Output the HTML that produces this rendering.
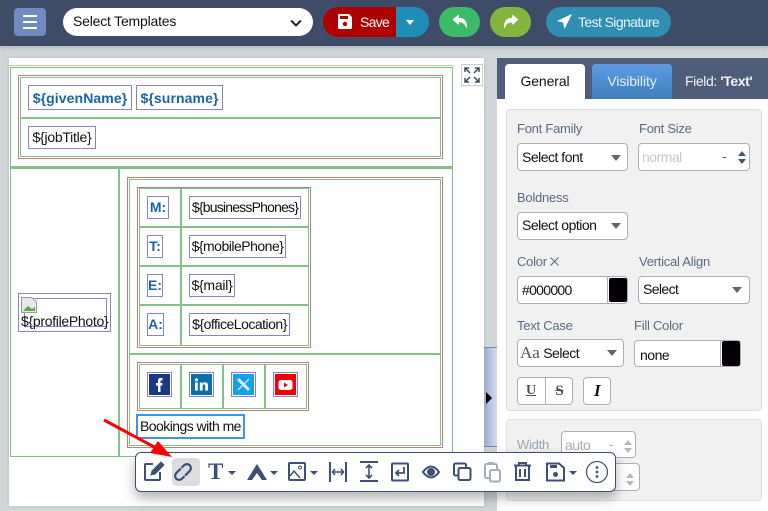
<!DOCTYPE html>
<html><head><meta charset="utf-8"><title>Signature Editor</title>
<style>
*{box-sizing:border-box}
html,body{margin:0;padding:0}
body{width:768px;height:511px;overflow:hidden;position:relative;background:#d0d6d8;font-family:"Liberation Sans",sans-serif;font-size:14px;color:#111}
.a{position:absolute;white-space:nowrap}
.g{position:absolute;border:1px solid #85c187}
.p{position:absolute;border:1px solid #c08080}
.gh{position:absolute;background:#85c187}
.b{position:absolute;border:1px solid #8b82c6;white-space:nowrap;line-height:20px;text-align:center;letter-spacing:-.25px}
.bold{font-weight:700;color:#1565a8;font-size:14px;letter-spacing:.1px}
.lab{position:absolute;color:#5a6b80;font-size:13px;white-space:nowrap;letter-spacing:-.25px}
.in{position:absolute;background:#fff;border:1px solid #adb0b3;border-radius:4px;white-space:nowrap;line-height:26px;padding-left:4px;letter-spacing:-.5px}
.car{position:absolute;width:0;height:0;border-left:5px solid transparent;border-right:5px solid transparent;border-top:6px solid #5d6a68}
.tc{position:absolute;width:0;height:0;border-left:4px solid transparent;border-right:4px solid transparent;border-top:4px solid #3d4f70}
.btn{position:absolute;top:7px;height:30px;border-radius:15px}
svg{position:absolute;overflow:visible}
</style></head><body>

<!-- top bar -->
<div class="a" style="left:0;top:0;width:768px;height:46px;background:#3e4c68;box-shadow:0 2px 4px rgba(0,0,0,.15)"></div>
<div class="a" style="left:14px;top:8px;width:32px;height:28px;background:#6f8bbf;border-radius:4px"></div>
<div class="a" style="left:23px;top:15px;width:14px;height:2px;background:#fff"></div>
<div class="a" style="left:23px;top:21px;width:14px;height:2px;background:#fff"></div>
<div class="a" style="left:23px;top:27px;width:14px;height:2px;background:#fff"></div>
<div class="a" style="left:63px;top:8px;width:250px;height:28px;background:#fff;border-radius:14px;line-height:26px;padding-left:10px;letter-spacing:-.2px">Select Templates</div>
<svg style="left:290px;top:19px" width="12" height="8"><path d="M1 1.500 6 6.500 11 1.500" fill="none" stroke="#222" stroke-width="2"/></svg>

<div class="btn" style="left:323px;width:75px;background:#ae0000;border-radius:15px 0 0 15px"></div>
<svg style="left:338px;top:14px" width="14" height="15" viewBox="0 0 14 15"><path d="M0 1.500Q0 0 1.500 0H11L14 3V13.500Q14 15 12.500 15H1.500Q0 15 0 13.500Z" fill="#fff"/><rect x="2" y="2" width="8" height="3" fill="#ae0000"/><circle cx="7" cy="10" r="2.200" fill="#ae0000"/></svg>
<div class="a" style="left:360px;top:14px;color:#fff;line-height:16px;letter-spacing:-.7px">Save</div>
<div class="btn" style="left:396px;width:33px;background:#1f8db6;border-radius:0 15px 15px 0"></div>
<div class="a" style="left:406px;top:20px;width:0;height:0;border-left:4.500px solid transparent;border-right:4.500px solid transparent;border-top:5px solid #fff"></div>
<div class="btn" style="left:439px;width:41px;background:#3bbb67"></div>
<svg style="left:452px;top:14px" width="16" height="15" viewBox="0 0 16 15"><path d="M1 5.500 6.500 1V4C12 4 15 7 14.500 14 13.500 10 11 8 6.500 8V10.500Z" fill="#fff" stroke="#fff" stroke-width=".6" stroke-linejoin="round"/></svg>
<div class="btn" style="left:490px;width:41px;background:#84b33e"></div>
<svg style="left:503px;top:14px" width="16" height="15" viewBox="0 0 16 15"><path d="M15 5.500 9.500 1V4C4 4 1 7 1.500 14 2.500 10 5 8 9.500 8V10.500Z" fill="#fff" stroke="#fff" stroke-width=".6" stroke-linejoin="round"/></svg>
<div class="btn" style="left:546px;width:125px;background:#2f8eb2"></div>
<svg style="left:557px;top:14px" width="15" height="15" viewBox="0 0 15 15"><path d="M15 0 0 7 6 8.500 7.500 15Z" fill="#fff"/></svg>
<div class="a" style="left:578px;top:14px;color:#e8f2f6;line-height:16px;letter-spacing:-.6px">Test Signature</div>

<!-- canvas -->
<div class="a" style="left:9px;top:58px;width:475px;height:448px;background:#fff;box-shadow:0 0 3px rgba(0,0,0,.12)"></div>
<div class="a" style="left:461px;top:64px;width:22px;height:22px;border:1px solid #ccc;background:#fff"></div>
<svg style="left:464px;top:67px" width="16" height="16" viewBox="0 0 16 16"><g fill="none" stroke="#3e4c60" stroke-width="1.500"><path d="M1 5V1H5M1 1 6 6M15 5V1H11M15 1 10 6M1 11V15H5M1 15 6 10M15 11V15H11M15 15 10 10"/></g></svg>

<div class="a" style="left:9px;top:65px;width:445px;height:1px;background:#cdc9a0"></div>
<div class="g" style="left:10px;top:67px;width:443px;height:390px"></div>
<div class="p" style="left:18px;top:75px;width:425px;height:84px"></div>
<div class="g" style="left:20px;top:77px;width:421px;height:80px"></div>
<div class="gh" style="left:20px;top:117px;width:421px;height:2px"></div>
<div class="gh" style="left:10px;top:166px;width:443px;height:3px"></div>
<div class="gh" style="left:118px;top:168px;width:2px;height:288px"></div>
<div class="p" style="left:127px;top:177px;width:316px;height:271px"></div>
<div class="g" style="left:129px;top:179px;width:312px;height:267px"></div>
<div class="gh" style="left:129px;top:353px;width:312px;height:2px"></div>
<div class="p" style="left:137px;top:187px;width:174px;height:161px"></div>
<div class="g" style="left:139px;top:188px;width:170px;height:158px"></div>
<div class="gh" style="left:180px;top:188px;width:2px;height:158px"></div>
<div class="gh" style="left:139px;top:226px;width:170px;height:2px"></div>
<div class="gh" style="left:139px;top:265px;width:170px;height:2px"></div>
<div class="gh" style="left:139px;top:304px;width:170px;height:2px"></div>

<div class="b bold" style="left:28px;top:85px;width:104px;height:25px;line-height:24px">${givenName}</div>
<div class="b bold" style="left:136px;top:85px;width:87px;height:25px;line-height:24px">${surname}</div>
<div class="b" style="left:28px;top:126px;width:68px;height:23px;line-height:21px">${jobTitle}</div>

<div class="b bold" style="left:147px;top:196px;width:22px;height:23px;line-height:21px;letter-spacing:0">M:</div>
<div class="b" style="left:189px;top:196px;width:112px;height:23px;line-height:21px;letter-spacing:-.8px">${businessPhones}</div>
<div class="b bold" style="left:147px;top:235px;width:16px;height:23px;line-height:21px;letter-spacing:0">T:</div>
<div class="b" style="left:189px;top:235px;width:97px;height:23px;line-height:21px;letter-spacing:-.5px">${mobilePhone}</div>
<div class="b bold" style="left:147px;top:274px;width:16px;height:23px;line-height:21px;letter-spacing:0">E:</div>
<div class="b" style="left:189px;top:274px;width:46px;height:23px;line-height:21px">${mail}</div>
<div class="b bold" style="left:147px;top:313px;width:17px;height:23px;line-height:21px;letter-spacing:0">A:</div>
<div class="b" style="left:189px;top:313px;width:101px;height:23px;line-height:21px;letter-spacing:-.5px">${officeLocation}</div>

<!-- profile -->
<div class="b" style="left:18px;top:293px;width:93px;height:39px"></div>
<div class="b" style="left:24px;top:298px;width:83px;height:29px"></div>
<svg style="left:21px;top:297px" width="16" height="16" viewBox="0 0 16 16"><path d="M.5.5H11L15.500 5V15.500H.5Z" fill="#e4e8ee" stroke="#9a9a9a"/><path d="M2 14 7 9 11 12 14 10V14Z" fill="#5fa83e"/></svg>
<div class="a" style="left:21px;top:313px;line-height:16px;letter-spacing:-.3px;font-size:14px">${profilePhoto}</div>

<!-- social -->
<div class="p" style="left:137px;top:362px;width:172px;height:49px"></div>
<div class="g" style="left:139px;top:364px;width:168px;height:45px"></div>
<div class="gh" style="left:180px;top:364px;width:2px;height:45px"></div>
<div class="gh" style="left:222px;top:364px;width:2px;height:45px"></div>
<div class="gh" style="left:264px;top:364px;width:2px;height:45px"></div>
<div class="b" style="left:147px;top:372px;width:25px;height:25px"></div>
<div class="b" style="left:189px;top:372px;width:25px;height:25px"></div>
<div class="b" style="left:231px;top:372px;width:25px;height:25px"></div>
<div class="b" style="left:273px;top:372px;width:25px;height:25px"></div>
<svg style="left:149px;top:374px" width="21" height="21" viewBox="0 0 21 21"><rect width="21" height="21" fill="#183a86"/><path d="M9 18V11.500H7V9H9V6.500Q9 4 11.500 4H13.500V6.500H12Q11.500 6.500 11.500 7.200V9H13.500L13.200 11.500H11.500V18Z" fill="#fff"/></svg>
<svg style="left:191px;top:374px" width="21" height="21" viewBox="0 0 21 21"><rect width="21" height="21" fill="#0a70ad"/><rect x="4" y="8.500" width="2.800" height="8" fill="#fff"/><circle cx="5.400" cy="5.800" r="1.600" fill="#fff"/><path d="M8.800 8.500H11.300V9.600Q12 8.300 14 8.300 17 8.300 17 11.500V16.500H14.200V12Q14.200 10.400 13 10.400 11.600 10.400 11.600 12V16.500H8.800Z" fill="#fff"/></svg>
<svg style="left:233px;top:374px" width="21" height="21" viewBox="0 0 21 21"><rect width="21" height="21" fill="#13a0ec"/><path d="M5 5 16 16" stroke="#d8f0fc" stroke-width="3"/><path d="M16 5 5 16" stroke="#d8f0fc" stroke-width="1.300"/></svg>
<svg style="left:275px;top:374px" width="21" height="21" viewBox="0 0 21 21"><rect width="21" height="21" fill="#f00006"/><rect x="3.500" y="6" width="14" height="10" rx="2.500" fill="#fff"/><path d="M9 8.500 13 11 9 13.500Z" fill="#f00006"/></svg>

<div class="a" style="left:136px;top:414px;width:109px;height:25px;border:2px solid #3b97e1;background:#fff;line-height:21px;padding-left:2px;letter-spacing:-.55px">Bookings with me</div>

<!-- side strip -->
<div class="a" style="left:484px;top:347px;width:13px;height:100px;background:linear-gradient(90deg,#9aa9c8,#d5deee);border-top:1px solid #6f88c0;border-bottom:1px solid #6f88c0"></div>
<div class="a" style="left:486px;top:392px;width:0;height:0;border-top:6px solid transparent;border-bottom:6px solid transparent;border-left:6px solid #000"></div>

<!-- right panel -->
<div class="a" style="left:497px;top:58px;width:271px;height:453px;background:#fff"></div>
<div class="a" style="left:497px;top:58px;width:271px;height:41px;background:#4e5d79"></div>
<div class="a" style="left:505px;top:64px;width:80px;height:35px;background:#fff;border-radius:4px 4px 0 0;text-align:center;line-height:35px;letter-spacing:-.1px">General</div>
<div class="a" style="left:592px;top:64px;width:80px;height:35px;background:linear-gradient(#5f9be2,#3f7fbc);border-radius:4px 4px 0 0;text-align:center;line-height:35px;color:#e2edf8;letter-spacing:-.1px">Visibility</div>
<div class="a" style="left:685px;top:73px;color:#f0f2f5;line-height:17px;letter-spacing:-.4px">Field: <b>'Text'</b></div>

<div class="a" style="left:506px;top:109px;width:256px;height:302px;background:#f1f1f1;border:1px solid #ddd;border-radius:4px"></div>
<div class="lab" style="left:517px;top:121px">Font Family</div>
<div class="lab" style="left:639px;top:121px">Font Size</div>
<div class="in" style="left:517px;top:143px;width:111px;height:28px">Select font</div><div class="car" style="left:611px;top:155px"></div>
<div class="in" style="left:638px;top:143px;width:112px;height:28px;color:#c4c8cc;padding-left:3px">normal</div>
<div class="a" style="left:722px;top:148px;color:#555;line-height:16px">-</div>
<div class="a" style="left:738px;top:151px;width:0;height:0;border-left:4px solid transparent;border-right:4px solid transparent;border-bottom:5px solid #45566e"></div>
<div class="a" style="left:738px;top:159px;width:0;height:0;border-left:4px solid transparent;border-right:4px solid transparent;border-top:5px solid #45566e"></div>

<div class="lab" style="left:517px;top:190px">Boldness</div>
<div class="in" style="left:517px;top:212px;width:111px;height:28px;line-height:25px">Select option</div><div class="car" style="left:611px;top:223px"></div>

<div class="lab" style="left:517px;top:254px">Color</div>
<svg style="left:550px;top:257px" width="9" height="9"><path d="M.5.5 8.500 8.500M8.500.5 .5 8.500" stroke="#5a6b80" stroke-width="1"/></svg>
<div class="lab" style="left:639px;top:254px">Vertical Align</div>
<div class="in" style="left:517px;top:276px;width:111px;height:28px;line-height:27px;letter-spacing:-.7px">#000000</div>
<div class="a" style="left:607px;top:276px;width:1px;height:28px;background:#adb0b3"></div>
<div class="a" style="left:609px;top:278px;width:18px;height:24px;background:#050005;border-radius:2px"></div>
<div class="in" style="left:638px;top:276px;width:112px;height:28px;line-height:25px;letter-spacing:-.6px">Select</div><div class="car" style="left:732px;top:287px"></div>

<div class="lab" style="left:517px;top:318px">Text Case</div>
<div class="lab" style="left:634px;top:318px">Fill Color</div>
<div class="in" style="left:517px;top:339px;width:107px;height:28px;padding-left:2px"><span style="font-family:'Liberation Serif',serif;font-size:17px;color:#555;letter-spacing:0">Aa</span> Select</div><div class="car" style="left:607px;top:350px"></div>
<div class="in" style="left:634px;top:340px;width:107px;height:27px;line-height:28px;padding-left:5px">none</div>
<div class="a" style="left:720px;top:340px;width:1px;height:27px;background:#adb0b3"></div>
<div class="a" style="left:722px;top:341px;width:18px;height:25px;background:#050005;border-radius:2px"></div>

<div class="in" style="left:517px;top:377px;width:56px;height:28px;padding:0"></div>
<div class="a" style="left:545px;top:377px;width:1px;height:28px;background:#adb0b3"></div>
<div class="a" style="left:517px;top:377px;width:28px;height:28px;text-align:center;line-height:28px;font-family:'Liberation Serif',serif;font-weight:700;color:#45505a;text-decoration:underline;font-size:14px">U</div>
<div class="a" style="left:546px;top:377px;width:27px;height:28px;text-align:center;line-height:28px;font-family:'Liberation Serif',serif;font-weight:700;color:#45505a;text-decoration:line-through;font-size:15px">S</div>
<div class="in" style="left:583px;top:377px;width:28px;height:28px;padding:0;text-align:center;font-family:'Liberation Serif',serif;font-weight:700;font-style:italic;font-size:17px;color:#111">I</div>

<div class="a" style="left:506px;top:419px;width:256px;height:82px;background:#f1f1f1;border:1px solid #e2e2e2;border-radius:4px"></div>
<div class="lab" style="left:517px;top:437px;color:#9aa5b2">Width</div>
<div class="in" style="left:561px;top:431px;width:75px;height:27px;color:#a8aeb4;padding-left:3px;line-height:27px">auto</div>
<div class="a" style="left:609px;top:436px;color:#aaa;line-height:16px">-</div>
<div class="a" style="left:624px;top:440px;width:0;height:0;border-left:4px solid transparent;border-right:4px solid transparent;border-bottom:5px solid #b4bac2"></div>
<div class="a" style="left:624px;top:448px;width:0;height:0;border-left:4px solid transparent;border-right:4px solid transparent;border-top:5px solid #b4bac2"></div>
<div class="in" style="left:590px;top:463px;width:50px;height:28px"></div>
<div class="a" style="left:626px;top:473px;width:0;height:0;border-left:4px solid transparent;border-right:4px solid transparent;border-bottom:5px solid #b4bac2"></div>
<div class="a" style="left:626px;top:481px;width:0;height:0;border-left:4px solid transparent;border-right:4px solid transparent;border-top:5px solid #b4bac2"></div>

<!-- toolbar -->
<div class="a" style="left:135px;top:452px;width:481px;height:40px;background:#fff;border:1px solid #3d4f70;border-radius:6px;box-shadow:0 6px 12px rgba(0,0,0,.3)"></div>
<div class="a" style="left:172px;top:458px;width:28px;height:28px;background:#ddd;border-radius:4px"></div>
<svg style="left:135px;top:452px" width="481" height="40" viewBox="135 452 481 40">
<g fill="none" stroke="#3d5073" stroke-width="2">
<path d="M153 464H146Q145 464 145 465V479Q145 480 146 480H159Q160 480 160 479V472"/>
<path d="M151 475 152 471 161 462 164 465 155 474Z" fill="#3d5073" stroke-width="1"/>
<g transform="rotate(-45 183 472)" stroke-width="2.200"><path d="M184 468H177.500a4 4 0 0 0 0 8H181"/><path d="M182 476H188.500a4 4 0 0 0 0-8H185"/></g>
<rect x="289" y="463" width="16" height="17" rx="1"/>
<path d="M290 476 294 471 300 478" stroke-width="1.500"/><circle cx="300" cy="467.500" r="1.500" stroke-width="1"/>
<path d="M330 462V482M346 462V482" stroke-width="2"/><path d="M333 472H343M335 469 332.500 472 335 475M341 469 343.500 472 341 475" stroke-width="1.600"/>
<path d="M360 462H378M360 481H378" stroke-width="2"/><path d="M369 465V478M366 468 369 465 372 468M366 475 369 478 372 475" stroke-width="1.600"/>
<rect x="392" y="463.500" width="16" height="17" rx="1"/><path d="M404 467V473H396M399 470 396 473 399 476" stroke-width="1.800"/>
<path d="M423 472Q431 461 439 472 431 483 423 472Z"/><circle cx="431" cy="472" r="3" fill="#3d5073"/>
<rect x="454" y="463.500" width="12" height="12" rx="1.500"/><rect x="458.500" y="468" width="12" height="12" rx="1.500" fill="#fff"/>
<g stroke="#a3aec0"><rect x="485" y="464" width="12" height="14" rx="1.500"/><rect x="490" y="470" width="10" height="11.500" rx="1.500" fill="#fff"/><path d="M488 463H494"/></g>
<path d="M516 466V480H529V466M514 465.500H531M519 465V463H526V465M520 469V477M525 469V477"/>
<path d="M547 463.500H559L564 468V480.500H547Z"/><rect x="550" y="465" width="7" height="3" fill="#3d5073" stroke="none"/><circle cx="555.500" cy="474.500" r="2.500" fill="#3d5073" stroke="none"/>
<circle cx="597" cy="472" r="10.500" stroke-width="1.200"/>
</g>
<circle cx="597" cy="467.500" r="1.400" fill="#3d5073"/><circle cx="597" cy="472" r="1.400" fill="#3d5073"/><circle cx="597" cy="476.500" r="1.400" fill="#3d5073"/>
<path d="M247 480 257 464 267 480H262L257 473 252 480Z" fill="#3d5073"/>
</svg>
<div class="a" style="left:208px;top:460px;font-family:'Liberation Serif',serif;font-weight:700;font-size:23px;color:#3d5073;line-height:24px">T</div>
<div class="tc" style="left:228px;top:471px"></div>
<div class="tc" style="left:270px;top:471px"></div>
<div class="tc" style="left:310px;top:471px"></div>
<div class="tc" style="left:569px;top:471px"></div>

<!-- red arrow -->
<svg style="left:0;top:0" width="768" height="511"><path d="M104 420 158 449" stroke="#f00" stroke-width="3"/><path d="M172 457 150 453 158 441Z" fill="#f00"/></svg>

</body></html>
